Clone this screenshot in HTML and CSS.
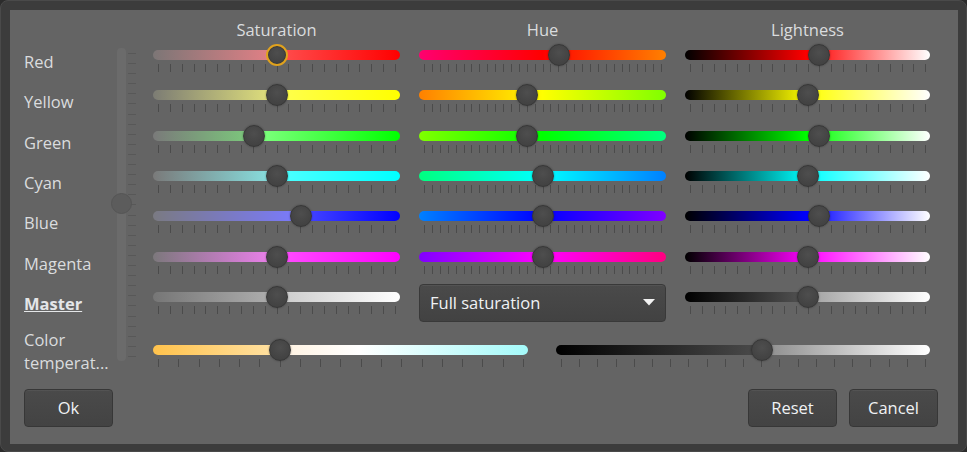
FILE: index.html
```html
<!DOCTYPE html>
<html lang="en">
<head>
<meta charset="utf-8">
<title>Color adjustment</title>
<link rel="stylesheet" href="styles.css">
</head>
<body>
<div class="window">
  <div class="panel">
    <div class="head c-sat">Saturation</div>
    <div class="head c-hue">Hue</div>
    <div class="head c-lit">Lightness</div>

    <div class="vslider">
      <div class="vtrack"></div>
      <div class="vticks"></div>
      <div class="vthumb"></div>
    </div>

    <div class="label">Red</div>
    <div class="slider c-sat" style="--v:.5"><div class="track sat-red"></div><div class="ticks t20"></div><div class="thumb focus"></div></div>
    <div class="slider c-hue" style="--v:.575"><div class="track hue-red"></div><div class="ticks t30"></div><div class="thumb"></div></div>
    <div class="slider c-lit" style="--v:.55"><div class="track lit-red"></div><div class="ticks t20"></div><div class="thumb"></div></div>

    <div class="label">Yellow</div>
    <div class="slider c-sat" style="--v:.5"><div class="track sat-yellow"></div><div class="ticks t20"></div><div class="thumb"></div></div>
    <div class="slider c-hue" style="--v:.43"><div class="track hue-yellow"></div><div class="ticks t30"></div><div class="thumb"></div></div>
    <div class="slider c-lit" style="--v:.5"><div class="track lit-yellow"></div><div class="ticks t20"></div><div class="thumb"></div></div>

    <div class="label">Green</div>
    <div class="slider c-sat" style="--v:.4"><div class="track sat-green"></div><div class="ticks t20"></div><div class="thumb"></div></div>
    <div class="slider c-hue" style="--v:.43"><div class="track hue-green"></div><div class="ticks t30"></div><div class="thumb"></div></div>
    <div class="slider c-lit" style="--v:.55"><div class="track lit-green"></div><div class="ticks t20"></div><div class="thumb"></div></div>

    <div class="label">Cyan</div>
    <div class="slider c-sat" style="--v:.5"><div class="track sat-cyan"></div><div class="ticks t20"></div><div class="thumb"></div></div>
    <div class="slider c-hue" style="--v:.5"><div class="track hue-cyan"></div><div class="ticks t30"></div><div class="thumb"></div></div>
    <div class="slider c-lit" style="--v:.5"><div class="track lit-cyan"></div><div class="ticks t20"></div><div class="thumb"></div></div>

    <div class="label">Blue</div>
    <div class="slider c-sat" style="--v:.61"><div class="track sat-blue"></div><div class="ticks t20"></div><div class="thumb"></div></div>
    <div class="slider c-hue" style="--v:.5"><div class="track hue-blue"></div><div class="ticks t30"></div><div class="thumb"></div></div>
    <div class="slider c-lit" style="--v:.55"><div class="track lit-blue"></div><div class="ticks t20"></div><div class="thumb"></div></div>

    <div class="label">Magenta</div>
    <div class="slider c-sat" style="--v:.5"><div class="track sat-magenta"></div><div class="ticks t20"></div><div class="thumb"></div></div>
    <div class="slider c-hue" style="--v:.5"><div class="track hue-magenta"></div><div class="ticks t30"></div><div class="thumb"></div></div>
    <div class="slider c-lit" style="--v:.5"><div class="track lit-magenta"></div><div class="ticks t20"></div><div class="thumb"></div></div>

    <div class="label master">Master</div>
    <div class="slider c-sat" style="--v:.5"><div class="track sat-master"></div><div class="ticks t20"></div><div class="thumb"></div></div>
    <div class="combo c-hue">
      <span>Full saturation</span>
      <svg class="arrow" width="12" height="7" viewBox="0 0 12 7"><path d="M0 0H12L6 6.5Z" fill="#f2f2f2"/></svg>
    </div>
    <div class="slider c-lit" style="--v:.5"><div class="track lit-master"></div><div class="ticks t20"></div><div class="thumb"></div></div>

    <div class="label temp"><span>Color</span><span>temperat...</span></div>
    <div class="temprow">
      <div class="slider" style="--v:.329"><div class="track temp-warm"></div><div class="ticks t18"></div><div class="thumb"></div></div>
      <div class="slider" style="--v:.556"><div class="track temp-gray"></div><div class="ticks t20"></div><div class="thumb"></div></div>
    </div>

    <div class="buttons">
      <div class="btn">Ok</div>
      <div class="spacer"></div>
      <div class="btn">Reset</div>
      <div class="btn">Cancel</div>
    </div>
  </div>
</div>
</body>
</html>
```

FILE: styles.css
```css
* { box-sizing: border-box; }
html, body { margin: 0; padding: 0; }
body {
  width: 967px;
  height: 452px;
  overflow: hidden;
  background: #2c2c2c;
  font-family: "Open Sans", "Noto Sans", sans-serif;
  font-size: 16.5px;
  color: #dadcde;
}

.window {
  width: 967px;
  height: 452px;
  background: #3c3c3c;
  border: 1px solid #4a4a4a;
  border-radius: 8px;
  padding: 9px 8px 7px 9px;
}

.panel {
  width: 948px;
  height: 434px;
  background: #646464;
  padding: 6px 0 0 14px;
  display: grid;
  grid-template-columns: 89px 40px 247px 19px 247px 19px 245px;
  grid-template-rows: 28px repeat(7, 40.333px) 62.667px auto;
}

.head {
  line-height: 28px;
  text-align: center;
  color: #dadcde;
}
.c-sat { grid-column: 3; }
.c-hue { grid-column: 5; }
.c-lit { grid-column: 7; }

.label {
  grid-column: 1;
  align-self: start;
  line-height: 22px;
  margin-top: 7px;
  white-space: nowrap;
}
.label.master {
  font-weight: 700;
  text-decoration: underline;
  color: #e4e6e8;
}
.label.temp {
  line-height: 23px;
  margin-top: 2px;
}
.label.temp span {
  display: block;
  white-space: nowrap;
}

/* horizontal slider */
.slider {
  position: relative;
  align-self: start;
  margin-top: 6px;
  height: 22px;
}
.track {
  height: 10px;
  border-radius: 5px;
}
.ticks {
  height: 8px;
  margin: 4px 4px 0 5px;
  background: repeating-linear-gradient(90deg, #4b4b4b 0 1px, transparent 1px calc((100% - 1px) / var(--n)));
}
.t18 { --n: 18; }
.t20 { --n: 20; }
.t30 { --n: 30; }

.thumb {
  position: absolute;
  top: -6px;
  left: calc((100% - 22px) * var(--v));
  width: 22px;
  height: 22px;
  border-radius: 50%;
  background: radial-gradient(circle at 50% 38%, #4e4e4e 0, #444 60%, #3f3f3f 100%);
  border: 1px solid #363636;
  box-shadow: 0 0 2px rgba(0, 0, 0, .35);
}
.thumb.focus {
  border: 2px solid #e0a21d;
  box-shadow: inset 0 0 0 1px #3a3a3a;
}

/* saturation tracks */
.sat-red { background: linear-gradient(90deg, #7c7676 0, #e68086 50%, #ff5050 50%, #ff0000 100%); }
.sat-yellow { background: linear-gradient(90deg, #7c7c74 0, #e4e47c 50%, #ffff50 50%, #ffff00 100%); }
.sat-green { background: linear-gradient(90deg, #7a7a7a 0, #7ccc7c 40.9%, #84ff84 40.9%, #00ff00 100%); }
.sat-cyan { background: linear-gradient(90deg, #7a7a7a 0, #88e4e4 50%, #50ffff 50%, #00ffff 100%); }
.sat-blue { background: linear-gradient(90deg, #7a7a82 0, #7a7aff 59.5%, #4848ff 59.5%, #0000ff 100%); }
.sat-magenta { background: linear-gradient(90deg, #7c787c 0, #f080f0 50%, #ff50ff 50%, #ff00ff 100%); }
.sat-master { background: linear-gradient(90deg, #767676 0, #b0b0b0 50%, #cacaca 50%, #ffffff 100%); }

/* hue tracks */
.hue-red { background: linear-gradient(90deg, #ff0070, #ff0000 50%, #ff8000); }
.hue-yellow { background: linear-gradient(90deg, #ff8000, #ffff00 50%, #80ff00); }
.hue-green { background: linear-gradient(90deg, #80ff00, #00ff00 50%, #00ff80); }
.hue-cyan { background: linear-gradient(90deg, #00ff80, #00ffff 50%, #0080ff); }
.hue-blue { background: linear-gradient(90deg, #0080ff, #0000ff 50%, #8000ff); }
.hue-magenta { background: linear-gradient(90deg, #8000ff, #ff00ff 50%, #ff0080); }

/* lightness tracks */
.lit-red { background: linear-gradient(90deg, #000, #ff0000 50%, #fff); }
.lit-yellow { background: linear-gradient(90deg, #000, #ffff00 50%, #fff); }
.lit-green { background: linear-gradient(90deg, #000, #00ff00 50%, #fff); }
.lit-cyan { background: linear-gradient(90deg, #000, #00ffff 50%, #fff); }
.lit-blue { background: linear-gradient(90deg, #000, #0000ff 50%, #fff); }
.lit-magenta { background: linear-gradient(90deg, #000, #ff00ff 50%, #fff); }
.lit-master { background: linear-gradient(90deg, #000 0, #555 50%, #a0a0a0 50%, #fff 100%); }

/* temperature tracks */
.temp-warm { background: linear-gradient(90deg, #ffc24c 0, #ffe2a6 33.9%, #fff2e0 33.9%, #ffffff 55%, #a4fafa 100%); }
.temp-gray { background: linear-gradient(90deg, #000 0, #4c4c4c 55.3%, #8c8c8c 55.3%, #fff 100%); }

.temprow {
  grid-column: 3 / 8;
  align-self: start;
  margin-top: 19px;
  display: flex;
  gap: 28px;
}
.temprow .slider {
  flex: 1;
  margin-top: 0;
}

/* vertical slider */
.vslider {
  grid-column: 2;
  grid-row: 2 / span 8;
  align-self: start;
  margin-top: 4px;
  height: 313px;
  position: relative;
  display: flex;
  gap: 2px;
  padding-left: 4px;
}
.vtrack {
  width: 9px;
  height: 100%;
  background: #6b6b6b;
  border-radius: 4px;
}
.vticks {
  width: 8px;
  margin: 5px 0 4px;
  background: repeating-linear-gradient(180deg, #585858 0 1px, transparent 1px calc((100% - 1px) / 30));
}
.vthumb {
  position: absolute;
  left: -2px;
  top: calc(50% - 12px);
  width: 21px;
  height: 21px;
  border-radius: 50%;
  background: #5c5c5c;
  border: 1px solid #555;
}

/* combo box */
.combo {
  align-self: start;
  margin-top: -2px;
  height: 38px;
  display: flex;
  align-items: center;
  justify-content: space-between;
  padding: 0 10px 0 10px;
  background: linear-gradient(#4a4a4a, #424242);
  border: 1px solid #393939;
  border-radius: 4px;
  color: #f0f2f4;
  box-shadow: inset 0 1px 0 rgba(255, 255, 255, .05);
}
.arrow { display: block; }

/* buttons */
.buttons {
  grid-column: 1 / -1;
  align-self: start;
  margin-right: -8px;
  display: flex;
  gap: 12px;
}
.spacer { flex: 1; }
.btn {
  width: 89px;
  height: 38px;
  display: flex;
  align-items: center;
  justify-content: center;
  background: linear-gradient(#4a4a4a, #434343);
  border: 1px solid #373737;
  border-radius: 4px;
  color: #f0f2f4;
  box-shadow: inset 0 1px 0 rgba(255, 255, 255, .05);
}
```
